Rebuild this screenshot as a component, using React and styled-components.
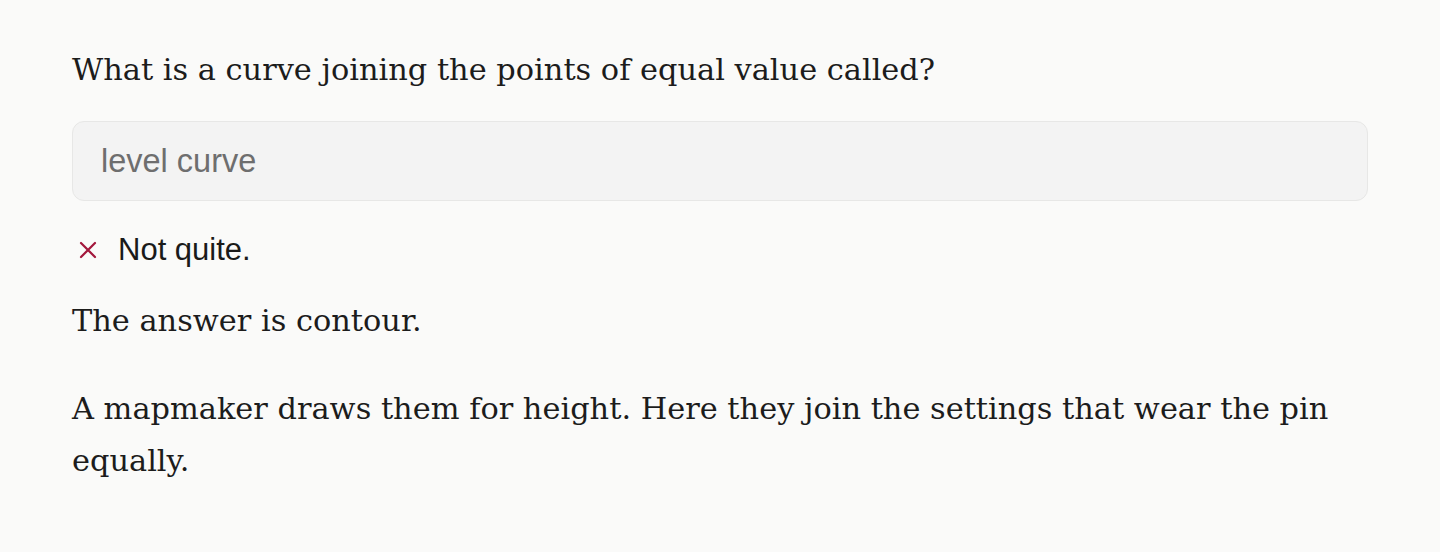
import styled, { createGlobalStyle } from "styled-components";

const GlobalStyle = createGlobalStyle`
  html, body {
    margin: 0;
    padding: 0;
    background: #fafaf9;
  }
`;

const Page = styled.main`
  box-sizing: border-box;
  width: 1440px;
  min-height: 552px;
  padding: 45px 72px 40px;
  background: #fafaf9;
  color: #1c1c1c;
  font-family: "DejaVu Serif", "Liberation Serif", serif;
`;

const Question = styled.p`
  margin: 0 0 26px;
  font-size: 30.4px;
  line-height: 50px;
`;

const AnswerBox = styled.div`
  box-sizing: border-box;
  display: flex;
  align-items: center;
  height: 80px;
  padding: 0 28px;
  border: 1px solid #e7e7e6;
  border-radius: 12px;
  background: #f3f3f3;
  font-family: "Liberation Sans", Arial, sans-serif;
  font-size: 32.5px;
  color: #6e6e6e;
`;

const Feedback = styled.div`
  display: flex;
  align-items: center;
  gap: 21px;
  height: 36px;
  margin: 31px 0 27px 7px;
  font-family: "Liberation Sans", Arial, sans-serif;
  font-size: 31px;
  color: #1a1a1a;
`;

const Cross = styled.svg`
  width: 18px;
  height: 18px;
  flex: none;
`;

const Body = styled.p`
  margin: 0 0 36px;
  font-size: 30.4px;
  line-height: 52px;
`;

export default function App() {
  return (
    <>
      <GlobalStyle />
      <Page>
        <Question>What is a curve joining the points of equal value called?</Question>
        <AnswerBox>level curve</AnswerBox>
        <Feedback>
          <Cross viewBox="0 0 18 18" fill="none" stroke="#a3173c" strokeWidth="2.2" strokeLinecap="round">
            <path d="M2 2 L16 16 M16 2 L2 16" />
          </Cross>
          <span>Not quite.</span>
        </Feedback>
        <Body>The answer is contour.</Body>
        <Body>
          A mapmaker draws them for height. Here they join the settings that wear the pin equally.
        </Body>
      </Page>
    </>
  );
}
